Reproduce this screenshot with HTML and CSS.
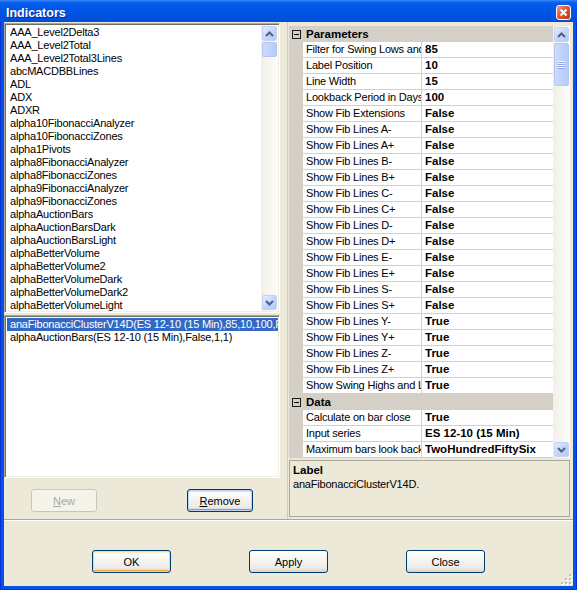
FILE: index.html
```html
<!DOCTYPE html>
<html>
<head>
<meta charset="utf-8">
<title>Indicators</title>
<link rel="stylesheet" href="styles.css">
</head>
<body>
<div class="window">
	<div class="titlebar">
		<span class="title">Indicators</span>
		<span class="close-btn">
			<svg width="15" height="15" viewBox="0 0 15 15">
				<defs>
					<linearGradient id="closeFill" x1="0" y1="0" x2="1" y2="1">
						<stop offset="0" stop-color="#f2a48a"/>
						<stop offset="0.45" stop-color="#e2583a"/>
						<stop offset="1" stop-color="#c2330f"/>
					</linearGradient>
				</defs>
				<rect x="0.5" y="0.5" width="14" height="14" rx="2.5" fill="url(#closeFill)" stroke="#fff"/>
				<path d="M4.5 4.5 L10.5 10.5 M10.5 4.5 L4.5 10.5" stroke="#fff" stroke-width="2"/>
			</svg>
		</span>
	</div>

	<div class="client">
		<div class="panes">
			<div class="left-pane">
				<!-- all installed indicators -->
				<div class="listbox list-available">
					<ul class="items">
						<li>AAA_Level2Delta3</li>
						<li>AAA_Level2Total</li>
						<li>AAA_Level2Total3Lines</li>
						<li>abcMACDBBLines</li>
						<li>ADL</li>
						<li>ADX</li>
						<li>ADXR</li>
						<li>alpha10FibonacciAnalyzer</li>
						<li>alpha10FibonacciZones</li>
						<li>alpha1Pivots</li>
						<li>alpha8FibonacciAnalyzer</li>
						<li>alpha8FibonacciZones</li>
						<li>alpha9FibonacciAnalyzer</li>
						<li>alpha9FibonacciZones</li>
						<li>alphaAuctionBars</li>
						<li>alphaAuctionBarsDark</li>
						<li>alphaAuctionBarsLight</li>
						<li>alphaBetterVolume</li>
						<li>alphaBetterVolume2</li>
						<li>alphaBetterVolumeDark</li>
						<li>alphaBetterVolumeDark2</li>
						<li>alphaBetterVolumeLight</li>
					</ul>
					<div class="vscroll">
						<div class="sb-btn"><svg width="9" height="6" viewBox="0 0 9 6"><path d="M1 5 L4.5 1.5 L8 5" class="chev"/></svg></div>
						<div class="sb-thumb small"></div>
						<div class="sb-track"></div>
						<div class="sb-btn down"><svg width="9" height="6" viewBox="0 0 9 6"><path d="M1 1 L4.5 4.5 L8 1" class="chev"/></svg></div>
					</div>
				</div>

				<!-- indicators on the chart -->
				<div class="listbox list-applied">
					<ul class="items">
						<li class="selected">anaFibonacciClusterV14D(ES 12-10 (15 Min),85,10,100,False,False,False,False,False,False,False)</li>
						<li>alphaAuctionBars(ES 12-10 (15 Min),False,1,1)</li>
					</ul>
				</div>

				<div class="pane-buttons">
					<button class="btn small disabled"><u>N</u>ew</button>
					<button class="btn small focused"><u>R</u>emove</button>
				</div>
			</div>

			<div class="right-pane">
				<div class="propgrid">
					<div class="pg-rows">
						<div class="pg-cat"><span class="pg-toggle"></span>Parameters</div>
						<div class="pg-row"><span class="pg-name">Filter for Swing Lows and Highs</span><span class="pg-value">85</span></div>
						<div class="pg-row"><span class="pg-name">Label Position</span><span class="pg-value">10</span></div>
						<div class="pg-row"><span class="pg-name">Line Width</span><span class="pg-value">15</span></div>
						<div class="pg-row"><span class="pg-name">Lookback Period in Days</span><span class="pg-value">100</span></div>
						<div class="pg-row"><span class="pg-name">Show Fib Extensions</span><span class="pg-value">False</span></div>
						<div class="pg-row"><span class="pg-name">Show Fib Lines A-</span><span class="pg-value">False</span></div>
						<div class="pg-row"><span class="pg-name">Show Fib Lines A+</span><span class="pg-value">False</span></div>
						<div class="pg-row"><span class="pg-name">Show Fib Lines B-</span><span class="pg-value">False</span></div>
						<div class="pg-row"><span class="pg-name">Show Fib Lines B+</span><span class="pg-value">False</span></div>
						<div class="pg-row"><span class="pg-name">Show Fib Lines C-</span><span class="pg-value">False</span></div>
						<div class="pg-row"><span class="pg-name">Show Fib Lines C+</span><span class="pg-value">False</span></div>
						<div class="pg-row"><span class="pg-name">Show Fib Lines D-</span><span class="pg-value">False</span></div>
						<div class="pg-row"><span class="pg-name">Show Fib Lines D+</span><span class="pg-value">False</span></div>
						<div class="pg-row"><span class="pg-name">Show Fib Lines E-</span><span class="pg-value">False</span></div>
						<div class="pg-row"><span class="pg-name">Show Fib Lines E+</span><span class="pg-value">False</span></div>
						<div class="pg-row"><span class="pg-name">Show Fib Lines S-</span><span class="pg-value">False</span></div>
						<div class="pg-row"><span class="pg-name">Show Fib Lines S+</span><span class="pg-value">False</span></div>
						<div class="pg-row"><span class="pg-name">Show Fib Lines Y-</span><span class="pg-value">True</span></div>
						<div class="pg-row"><span class="pg-name">Show Fib Lines Y+</span><span class="pg-value">True</span></div>
						<div class="pg-row"><span class="pg-name">Show Fib Lines Z-</span><span class="pg-value">True</span></div>
						<div class="pg-row"><span class="pg-name">Show Fib Lines Z+</span><span class="pg-value">True</span></div>
						<div class="pg-row"><span class="pg-name">Show Swing Highs and Lows</span><span class="pg-value">True</span></div>
						<div class="pg-cat"><span class="pg-toggle"></span>Data</div>
						<div class="pg-row"><span class="pg-name">Calculate on bar close</span><span class="pg-value">True</span></div>
						<div class="pg-row"><span class="pg-name">Input series</span><span class="pg-value">ES 12-10 (15 Min)</span></div>
						<div class="pg-row"><span class="pg-name">Maximum bars look back</span><span class="pg-value">TwoHundredFiftySix</span></div>
					</div>
					<div class="vscroll">
						<div class="sb-btn"><svg width="9" height="6" viewBox="0 0 9 6"><path d="M1 5 L4.5 1.5 L8 5" class="chev"/></svg></div>
						<div class="sb-thumb large"><span class="grip-lines"></span></div>
						<div class="sb-track"></div>
						<div class="sb-btn down"><svg width="9" height="6" viewBox="0 0 9 6"><path d="M1 1 L4.5 4.5 L8 1" class="chev"/></svg></div>
					</div>
				</div>
				<div class="pg-help">
					<b>Label</b>
					<span>anaFibonacciClusterV14D.</span>
				</div>
			</div>
		</div>

		<div class="separator"></div>

		<div class="dialog-buttons">
			<button class="btn default">OK</button>
			<button class="btn">Apply</button>
			<button class="btn">Close</button>
		</div>

		<svg class="size-grip" width="12" height="12" viewBox="0 0 12 12">
			<g fill="#fff">
				<rect x="10" y="2" width="2" height="2"/><rect x="10" y="6" width="2" height="2"/><rect x="6" y="6" width="2" height="2"/>
				<rect x="10" y="10" width="2" height="2"/><rect x="6" y="10" width="2" height="2"/><rect x="2" y="10" width="2" height="2"/>
			</g>
			<g fill="#c3bfae">
				<rect x="9" y="1" width="2" height="2"/><rect x="9" y="5" width="2" height="2"/><rect x="5" y="5" width="2" height="2"/>
				<rect x="9" y="9" width="2" height="2"/><rect x="5" y="9" width="2" height="2"/><rect x="1" y="9" width="2" height="2"/>
			</g>
		</svg>
	</div>
</div>
</body>
</html>
```

FILE: styles.css
```css
* {
	box-sizing: border-box;
}

body {
	margin: 0;
	font-family: "Liberation Sans", Arial, sans-serif;
	font-size: 11px;
	color: #000;
}

/* window frame */
.window {
	width: 577px;
	height: 590px;
	display: flex;
	flex-direction: column;
	background: #0553e4;
	box-shadow: inset 1px 0 #0831d9, inset -1px 0 #0831d9, inset 0 -1px #0831d9;
}

.titlebar {
	height: 22px;
	flex: none;
	display: flex;
	align-items: center;
	justify-content: space-between;
	padding: 3px 6px 0 6px;
	background: linear-gradient(#3d8ef7 0, #0c62f0 2px, #0058e8 6px, #0054e3 14px, #004cd8 22px);
}

.title {
	color: #fff;
	font-weight: bold;
	font-size: 12.5px;
	text-shadow: 1px 1px #0b2a8a;
}

.close-btn {
	display: flex;
	width: 15px;
	height: 15px;
}

.client {
	flex: 1;
	margin: 0 4px 4px 4px;
	background: #ece9d8;
	display: flex;
	flex-direction: column;
	position: relative;
}

.panes {
	height: 497px;
	flex: none;
	display: flex;
}

/* left side: two list boxes */
.left-pane {
	width: 284px;
	flex: none;
	padding-top: 1px;
	display: flex;
	flex-direction: column;
	border-right: 1px solid #d0ccbc;
}

.listbox {
	width: 276px;
	padding: 1px;
	display: flex;
	background: #fff;
	border: 1px solid;
	border-color: #aca899 #fff #fff #aca899;
	box-shadow: inset 1px 1px #716f64, inset -1px -1px #f1efe2;
	flex: none;
}

.list-available {
	height: 290px;
}

.list-applied {
	height: 163px;
	margin-top: 2px;
}

.items {
	list-style: none;
	margin: 0;
	padding: 1px 0 0 1px;
	flex: 1;
	min-width: 0;
	overflow: hidden;
	white-space: nowrap;
}

.items li {
	height: 13px;
	line-height: 13px;
	padding-left: 3px;
	letter-spacing: -0.2px;
	overflow: hidden;
}

.items li.selected {
	background: #316ac5;
	color: #fff;
}

.pane-buttons {
	flex: 1;
	display: flex;
	align-items: flex-start;
	padding: 11px 0 0 27px;
	gap: 90px;
}

/* scroll bars */
.vscroll {
	width: 17px;
	flex: none;
	display: flex;
	flex-direction: column;
	background: linear-gradient(90deg, #f1efe8, #fdfdfb);
}

.sb-btn {
	height: 15px;
	margin: 1px 1px 0 1px;
	flex: none;
	display: flex;
	align-items: center;
	justify-content: center;
	border: 1px solid #c2d1f6;
	border-radius: 2px;
	background: linear-gradient(135deg, #e4ecfe, #c6d6fb 50%, #b4c9f6);
}

.sb-btn.down {
	margin: 0 1px 1px 1px;
}

.chev {
	fill: none;
	stroke: #4d6185;
	stroke-width: 2;
}

.sb-thumb {
	margin: 1px 1px 0 1px;
	flex: none;
	display: flex;
	align-items: center;
	justify-content: center;
	border: 1px solid #b3c7f3;
	border-radius: 2px;
	background: linear-gradient(90deg, #cddbfc, #c1d3fb 50%, #b5cbf8);
}

.sb-thumb.small {
	height: 15px;
}

.sb-thumb.large {
	height: 43px;
}

.grip-lines {
	width: 7px;
	height: 8px;
	background: repeating-linear-gradient(#eef3fe 0 1px, #8eaae8 1px 2px);
}

.sb-track {
	flex: 1;
}

/* right side: property grid */
.right-pane {
	flex: 1;
	padding: 4px 3px 0 1px;
	display: flex;
	flex-direction: column;
}

.propgrid {
	height: 432px;
	flex: none;
	display: flex;
	background: #fff;
}

.pg-rows {
	flex: 1;
	overflow: hidden;
}

.pg-cat {
	height: 16px;
	display: flex;
	align-items: center;
	padding-left: 3px;
	background: #d4d0c8;
	font-weight: bold;
	font-size: 11.5px;
}

.pg-toggle {
	width: 9px;
	height: 9px;
	margin-right: 5px;
	border: 1px solid #1c1c1c;
	position: relative;
}

.pg-toggle::after {
	content: "";
	position: absolute;
	left: 1px;
	top: 3px;
	width: 5px;
	height: 1px;
	background: #000;
}

.pg-row {
	height: 16px;
	display: flex;
	padding: 0 0 1px 14px;
	background: #d4d0c8;
}

.pg-name {
	width: 118px;
	flex: none;
	margin-right: 1px;
	padding-left: 3px;
	line-height: 15px;
	background: #fff;
	white-space: nowrap;
	overflow: hidden;
	letter-spacing: -0.2px;
}

.pg-value {
	flex: 1;
	padding-left: 3px;
	line-height: 15px;
	background: #fff;
	font-weight: bold;
	font-size: 11.5px;
	white-space: nowrap;
	overflow: hidden;
}

.pg-help {
	height: 57px;
	margin-top: 2px;
	padding: 2px 3px;
	border: 1px solid #aca899;
	display: flex;
	flex-direction: column;
	line-height: 14px;
}

.pg-help b {
	font-size: 11.5px;
}

.pg-help span {
	letter-spacing: -0.2px;
}

.separator {
	height: 2px;
	flex: none;
	border-top: 1px solid #aca899;
	border-bottom: 1px solid #fff;
}

.dialog-buttons {
	flex: 1;
	display: flex;
	justify-content: center;
	align-items: flex-start;
	gap: 78px;
	padding-top: 29px;
}

/* xp style push buttons */
.btn {
	width: 79px;
	height: 23px;
	padding: 0;
	font-family: "Liberation Sans", Arial, sans-serif;
	font-size: 11px;
	color: #000;
	border: 1px solid #003c74;
	border-radius: 3px;
	background: linear-gradient(#ffffff, #f5f4f0 45%, #ecebe5 80%, #d8d2c6);
}

.btn.small {
	width: 66px;
}

.btn.default {
	box-shadow: inset 0 0 0 1px #fcd68a, inset 0 2px #ffecbf, inset 0 -2px #eaa43a;
}

.btn.focused {
	box-shadow: inset 0 0 0 1px #bcd0f6, inset 0 2px #cfe0fd, inset 0 -2px #7b9ce4;
}

.btn.disabled {
	color: #aca899;
	border-color: #c9c7ba;
	background: #f5f4ea;
}

.size-grip {
	position: absolute;
	right: 1px;
	bottom: 1px;
}
```
